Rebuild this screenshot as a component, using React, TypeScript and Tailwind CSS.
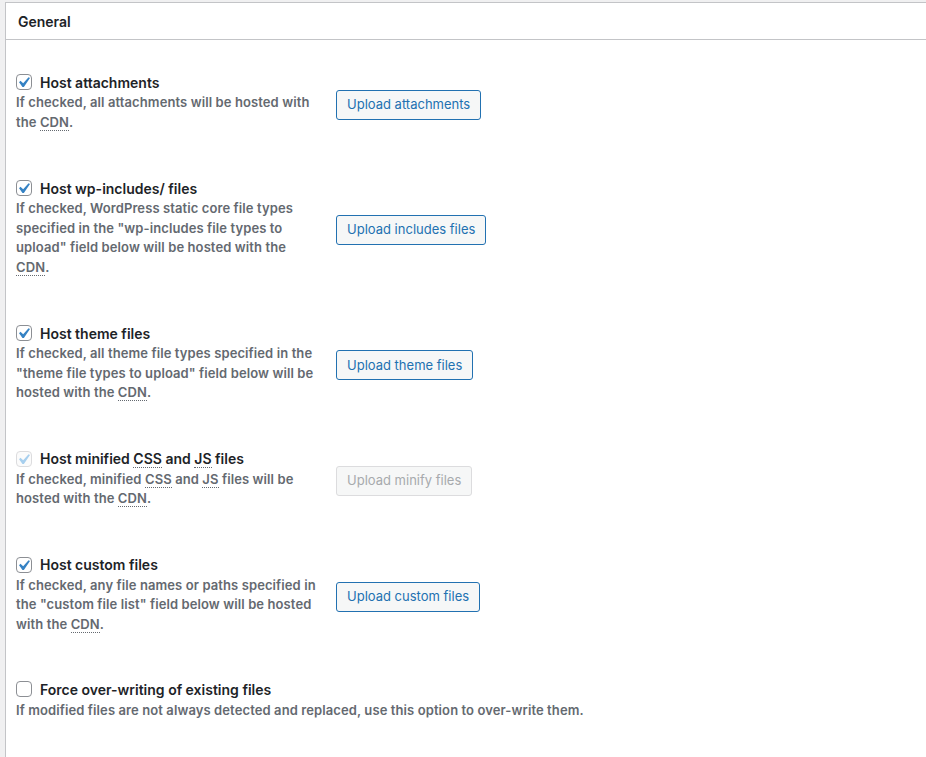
import React from "react";

const Abbr = ({ children }: { children: React.ReactNode }) => (
  <abbr className="border-b border-dotted border-[#646970]" style={{ textDecoration: "none" }}>
    {children}
  </abbr>
);

const Check = ({ checked, disabled }: { checked?: boolean; disabled?: boolean }) => (
  <span
    className={
      "relative block h-4 w-4 shrink-0 rounded-[4px] border " +
      (disabled ? "border-[#dcdcde] bg-[#fbfbfb]" : "border-[#8c8f94] bg-white")
    }
  >
    {checked && (
      <svg className="absolute left-[-4px] top-[-3px]" width="21" height="21" viewBox="0 0 20 20">
        <path
          d="M14.83 4.89l1.34.94-5.81 8.38H9.02L5.78 9.67l1.34-1.25 2.57 2.4z"
          fill={disabled ? "#a7cfee" : "#3582c4"}
        />
      </svg>
    )}
  </span>
);

type Row = {
  title: React.ReactNode;
  desc: React.ReactNode;
  button: string;
  checked?: boolean;
  disabled?: boolean;
};

const rows: Row[] = [
  {
    title: "Host attachments",
    desc: (
      <>
        If checked, all attachments will be hosted with the <Abbr>CDN</Abbr>.
      </>
    ),
    button: "Upload attachments",
    checked: true,
  },
  {
    title: "Host wp-includes/ files",
    desc: (
      <>
        If checked, WordPress static core file types specified in the "wp-includes file types to upload" field below
        will be hosted with the <Abbr>CDN</Abbr>.
      </>
    ),
    button: "Upload includes files",
    checked: true,
  },
  {
    title: "Host theme files",
    desc: (
      <>
        If checked, all theme file types specified in the "theme file types to upload" field below will be hosted
        with the <Abbr>CDN</Abbr>.
      </>
    ),
    button: "Upload theme files",
    checked: true,
  },
  {
    title: (
      <>
        Host minified <Abbr>CSS</Abbr> and <Abbr>JS</Abbr> files
      </>
    ),
    desc: (
      <>
        If checked, minified <Abbr>CSS</Abbr> and <Abbr>JS</Abbr> files will be hosted with the <Abbr>CDN</Abbr>.
      </>
    ),
    button: "Upload minify files",
    checked: true,
    disabled: true,
  },
  {
    title: "Host custom files",
    desc: (
      <>
        If checked, any file names or paths specified in the "custom file list" field below will be hosted with the{" "}
        <Abbr>CDN</Abbr>.
      </>
    ),
    button: "Upload custom files",
    checked: true,
  },
];

export default function App() {
  return (
    <div
      className="min-h-[757px] bg-[#f0f0f1] pl-[5px] pt-[2px]"
      style={{ fontFamily: "Inter, 'Liberation Sans', sans-serif" }}
    >
      <div className="min-h-[755px] border-l border-t border-[#c3c4c7] bg-white">
        <div className="flex h-[37px] items-center border-b border-[#c3c4c7] px-3 text-[14px] font-semibold text-[#1d2327]">
          General
        </div>
        <div className="flex flex-col gap-[44px] pl-[10px] pt-[32px]">
          {rows.map((r, i) => (
            <div key={i} className="flex items-center">
              <div className="w-[320px] pr-[20px]">
                <div className="flex h-5 items-center gap-2 text-[14px] font-semibold text-[#1d2327]">
                  <Check checked={r.checked} disabled={r.disabled} />
                  <span>{r.title}</span>
                </div>
                <div className="mt-[1px] pb-[2px] text-[13px] font-semibold leading-[19.5px] tracking-[0.1px] text-[#646970]">
                  {r.desc}
                </div>
              </div>
              <button
                className={
                  "mt-[3px] h-[30px] rounded-[3px] border px-[10px] text-[13px] " +
                  (r.disabled
                    ? "border-[#dcdcde] bg-[#f6f7f7] text-[#a7aaad]"
                    : "border-[#2271b1] bg-[#f6f7f7] text-[#2271b1]")
                }
              >
                {r.button}
              </button>
            </div>
          ))}
          <div className="-mt-px">
            <div className="flex h-5 items-center gap-2 text-[14px] font-semibold text-[#1d2327]">
              <Check />
              <span>Force over-writing of existing files</span>
            </div>
            <div className="mt-[2px] text-[13px] font-semibold leading-[19.5px] tracking-[0.1px] text-[#646970]">
              If modified files are not always detected and replaced, use this option to over-write them.
            </div>
          </div>
        </div>
      </div>
    </div>
  );
}
